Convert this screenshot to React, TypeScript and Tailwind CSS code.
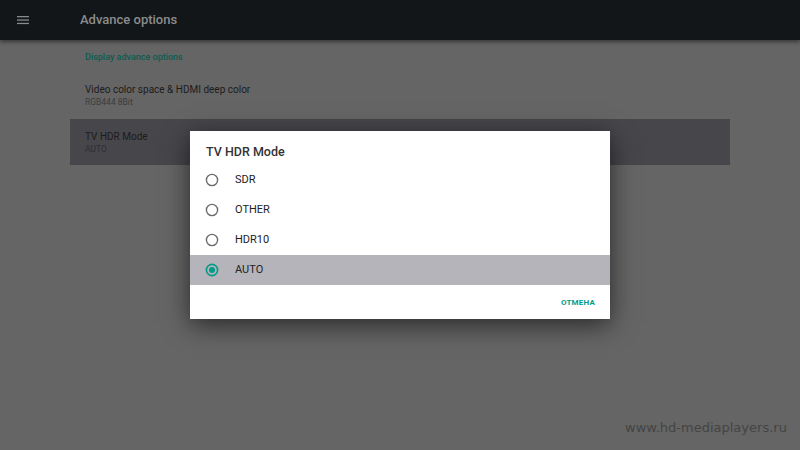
import React from "react";

function Radio({ checked }: { checked?: boolean }) {
  return (
    <svg width="14" height="14" viewBox="0 0 14 14">
      {checked ? (
        <>
          <circle cx="7" cy="7" r="5.6" fill="none" stroke="#009c88" strokeWidth="1.6" />
          <circle cx="7" cy="7" r="3" fill="#009c88" />
        </>
      ) : (
        <circle cx="7" cy="7" r="5.6" fill="none" stroke="#6b6b6b" strokeWidth="1.4" />
      )}
    </svg>
  );
}

export default function App() {
  const opts = ["SDR", "OTHER", "HDR10", "AUTO"];
  return (
    <div
      className="relative w-[800px] h-[450px] overflow-hidden bg-[#656565]"
      style={{ fontFamily: "Roboto, 'Noto Sans', sans-serif" }}
    >
      <div className="relative z-10 h-[40px] bg-[#121619] flex items-center shadow-[0_2px_4px_rgba(0,0,0,0.45)]">
        <div className="w-[80px] pl-[17px] flex">
          <svg width="12" height="10" viewBox="0 0 12 10">
            <rect x="0" y="1" width="12" height="1.3" fill="#8a8a8a" />
            <rect x="0" y="4.4" width="12" height="1.3" fill="#8a8a8a" />
            <rect x="0" y="7.8" width="12" height="1.3" fill="#8a8a8a" />
          </svg>
        </div>
        <div className="text-[13px] text-[#8c8c8c] font-medium">Advance options</div>
      </div>

      <div className="pl-[85px] pt-[11px] text-[9px] font-medium text-[#0d5c50] leading-[12px]">
        Display advance options
      </div>
      <div className="pl-[85px] pt-[20px] h-[56px]">
        <div className="text-[10px] text-[#1c1c1c] leading-[13px]">Video color space &amp; HDMI deep color</div>
        <div className="text-[8.5px] text-[#3c3c3c] leading-[12px]">RGB444 8Bit</div>
      </div>
      <div className="ml-[70px] w-[660px] h-[46px] bg-[#47464b] pl-[15px] pt-[11px]">
        <div className="text-[10px] text-[#1c1c1c] leading-[13px]">TV HDR Mode</div>
        <div className="text-[8.5px] text-[#2e2e33] leading-[12px]">AUTO</div>
      </div>

      <div className="absolute left-[190px] top-[131px] w-[420px] h-[188px] bg-white shadow-[0_6px_24px_rgba(0,0,0,0.6)] flex flex-col">
        <div className="h-[38px] pl-[16px] pt-[13px] text-[12.5px] font-medium text-[#333333] leading-[16px]">
          TV HDR Mode
        </div>
        <div className="flex flex-col mt-[-4px]">
          {opts.map((o) => (
            <div
              key={o}
              className={`h-[30px] flex items-center pl-[15px] ${o === "AUTO" ? "bg-[#b5b4bb]" : ""}`}
            >
              <Radio checked={o === "AUTO"} />
              <span className="ml-[16px] text-[11px] text-[#222222]">{o}</span>
            </div>
          ))}
        </div>
        <div className="flex justify-end pr-[15px] pt-[12px]">
          <span className="text-[8px] font-bold text-[#009c88] tracking-[0.2px]">ОТМЕНА</span>
        </div>
      </div>

      <div
        className="absolute left-[625px] top-[418px] text-[13px] text-[#444444]"
        style={{ fontFamily: "'DejaVu Sans', sans-serif" }}
      >
        www.hd-mediaplayers.ru
      </div>
    </div>
  );
}
